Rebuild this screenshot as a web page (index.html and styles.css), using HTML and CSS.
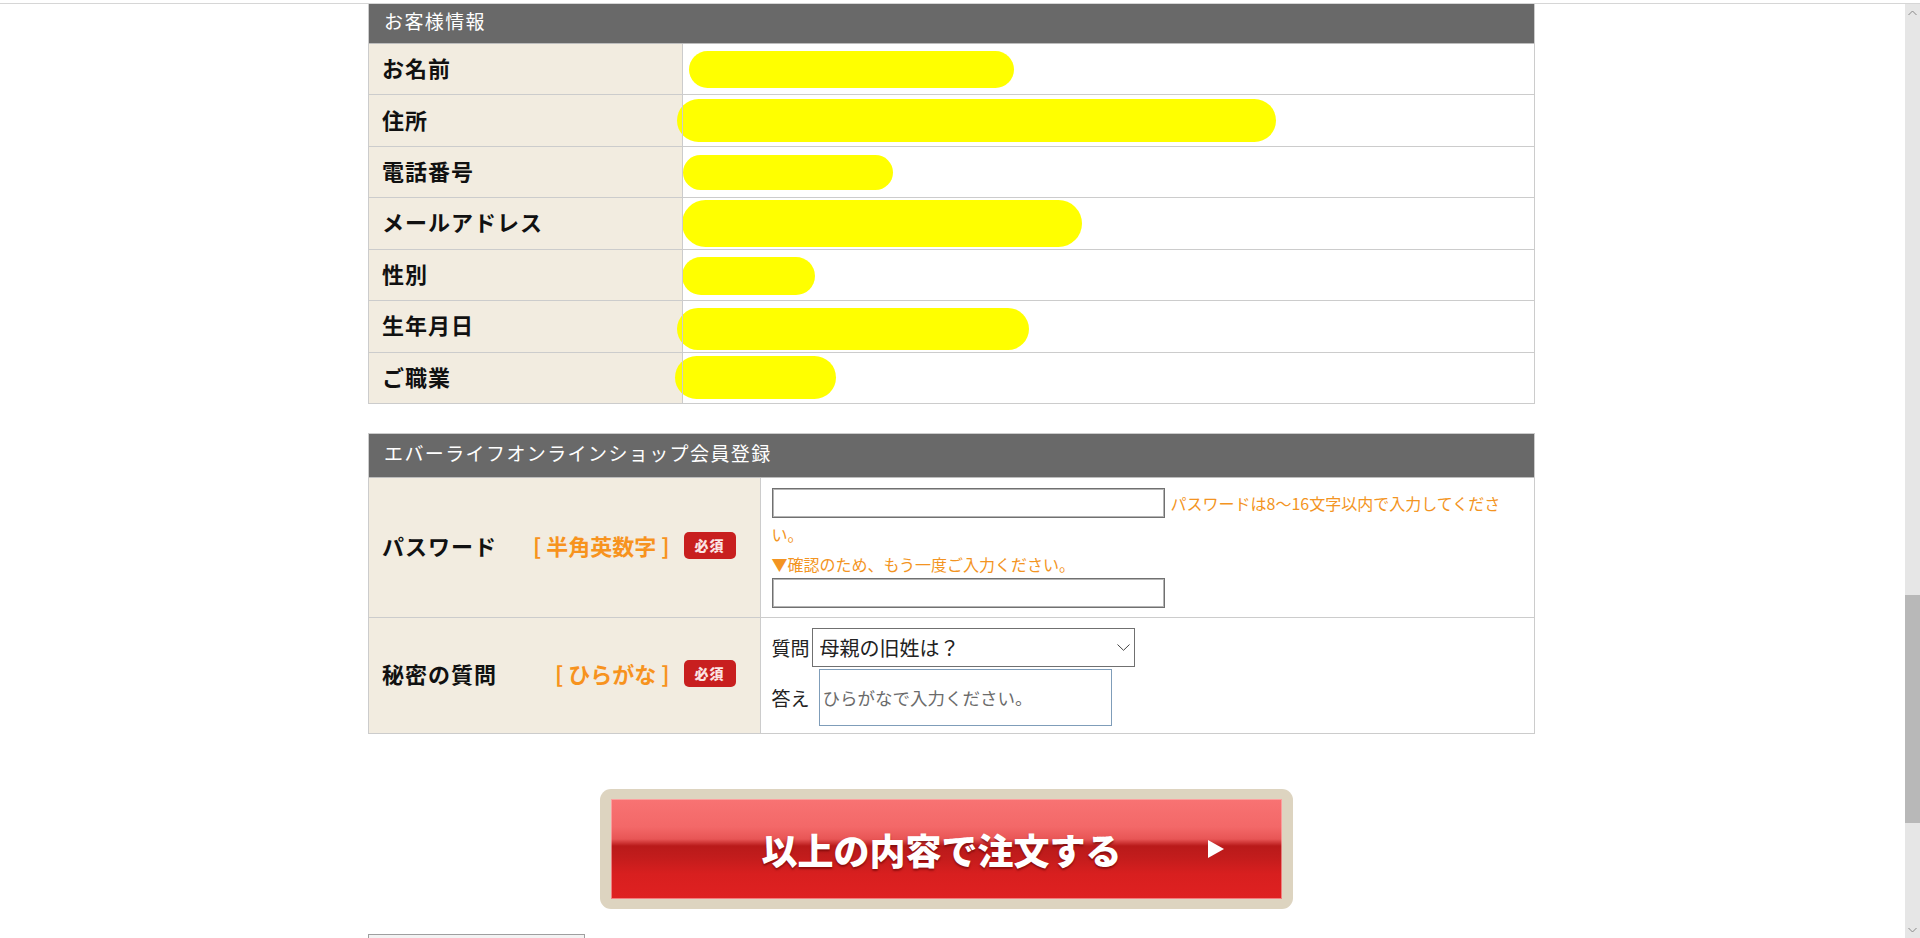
FILE: index.html
```html
<!DOCTYPE html>
<html lang="ja">
<head>
    <meta charset="UTF-8">
    <meta name="viewport" content="width=device-width, initial-scale=1.0">
    <title>ご注文内容の確認</title>
    <link rel="stylesheet" href="styles.css">
</head>
<body>
    <div class="topline"></div>
    <div class="window">
        <div class="page">
            <main class="content">
                <section class="box box-first">
                    <h2 class="box-title">お客様情報</h2>
                    <table class="info info-customer">
                        <tr><th>お名前</th><td><span class="mask mask-name"></span></td></tr>
                        <tr><th>住所</th><td><span class="mask mask-address"></span></td></tr>
                        <tr><th>電話番号</th><td><span class="mask mask-tel"></span></td></tr>
                        <tr><th>メールアドレス</th><td><span class="mask mask-mail"></span></td></tr>
                        <tr><th>性別</th><td><span class="mask mask-gender"></span></td></tr>
                        <tr><th>生年月日</th><td><span class="mask mask-birth"></span></td></tr>
                        <tr><th>ご職業</th><td><span class="mask mask-job"></span></td></tr>
                    </table>
                </section>

                <section class="box">
                    <h2 class="box-title">エバーライフオンラインショップ会員登録</h2>
                    <table class="info info-member">
                        <tr class="row-password">
                            <th>
                                <div class="label-wrap">
                                    <span>パスワード</span>
                                    <span class="label-side"><span class="hint">[ 半角英数字 ]</span><span class="required">必須</span></span>
                                </div>
                            </th>
                            <td>
                                <div class="pw-first"><input type="password" class="text-input"><span class="note">パスワードは8〜16文字以内で入力してください。</span></div>
                                <p class="note-block">▼確認のため、もう一度ご入力ください。</p>
                                <input type="password" class="text-input text-input-block">
                            </td>
                        </tr>
                        <tr>
                            <th>
                                <div class="label-wrap">
                                    <span>秘密の質問</span>
                                    <span class="label-side"><span class="hint">[ ひらがな ]</span><span class="required">必須</span></span>
                                </div>
                            </th>
                            <td>
                                <div class="qa-line">
                                    <span class="qa-label">質問</span>
                                    <span class="select-wrap">
                                        <select class="question">
                                            <option>母親の旧姓は？</option>
                                            <option>最初のペットの名前は？</option>
                                        </select>
                                        <svg class="chevron" width="13" height="7" viewBox="0 0 13 7"><polyline points="0.5,0.5 6.5,6.3 12.5,0.5" fill="none" stroke="#444" stroke-width="1"/></svg>
                                    </span>
                                </div>
                                <div class="qa-line">
                                    <span class="qa-label">答え</span>
                                    <input type="text" class="answer" placeholder="ひらがなで入力ください。">
                                </div>
                            </td>
                        </tr>
                    </table>
                </section>

                <div class="order">
                    <button type="button" class="order-btn"><span class="order-face">以上の内容で注文する<span class="order-arrow"></span></span></button>
                </div>

                <div class="back-box"></div>
            </main>
        </div>
        <div class="scrollbar">
            <span class="sb-arrow"><svg width="9" height="6" viewBox="0 0 9 6"><polyline points="0.5,5 4.5,1 8.5,5" fill="none" stroke="#888" stroke-width="1"/></svg></span>
            <div class="sb-track"><div class="sb-thumb"></div></div>
            <span class="sb-arrow"><svg width="9" height="6" viewBox="0 0 9 6"><polyline points="0.5,1 4.5,5 8.5,1" fill="none" stroke="#888" stroke-width="1"/></svg></span>
        </div>
    </div>
</body>
</html>
```

FILE: styles.css
```css
body {
    margin: 0;
    font-family: "Noto Sans CJK JP", "Noto Sans", sans-serif;
    background-color: #fff;
    color: #222;
    overflow: hidden;
}
.topline {
    height: 1px;
    margin-top: 3px;
    background-color: #d6d6d6;
}
.window {
    display: flex;
    height: 934px;
}
.page {
    flex: 1;
    overflow: hidden;
}
.content {
    width: 1167px;
    margin: 0 auto;
}

/* boxes */
.box {
    border: 1px solid #ccc;
    background-color: #fff;
}
.box + .box {
    margin-top: 29px;
}
.box-first {
    border-top: none;
}
.box-title {
    margin: 0;
    height: 43px;
    padding: 0 15px;
    background-color: #696969;
    color: #fff;
    font-size: 19px;
    font-weight: normal;
    letter-spacing: 1.4px;
    line-height: 38px;
    border-bottom: 1px solid #bdbdbd;
}
.box-first .box-title {
    height: 39px;
    line-height: 33px;
}

/* tables */
.info {
    width: 100%;
    border-collapse: collapse;
}
.info th {
    background-color: #f2ece0;
    text-align: left;
    font-size: 22px;
    font-weight: bold;
    letter-spacing: 1px;
    color: #111;
    padding: 0 13px 4px;
    border-right: 1px solid #ccc;
    vertical-align: middle;
    box-sizing: border-box;
}
.info tr + tr th,
.info tr + tr td {
    border-top: 1px solid #ccc;
}
.info-customer th {
    width: 313px;
    height: 50.43px;
}
.info-customer td {
    padding: 0;
    height: 50.43px;
}
.mask {
    display: block;
    background-color: #ff0;
    border-radius: 999px;
}
.mask-name { width: 325px; height: 37px; margin-left: 6px; }
.mask-address { width: 599px; height: 43px; margin-left: -6px; }
.mask-tel { width: 210px; height: 35px; }
.mask-mail { width: 400px; height: 47px; margin-left: -1px; }
.mask-gender { width: 133px; height: 38px; margin-left: -1px; margin-top: 2px; }
.mask-birth { width: 352px; height: 42px; margin-left: -6px; margin-top: 5px; }
.mask-job { width: 161px; height: 43px; margin-left: -8px; }

.info-member th {
    width: 391px;
    padding: 0 24px 4px 13px;
}
.info-member td {
    padding: 10px 20px 7px 11px;
    vertical-align: top;
}
.row-password td {
    padding-bottom: 9px;
}
.label-wrap {
    display: flex;
    align-items: center;
    justify-content: space-between;
}
.label-side {
    display: flex;
    align-items: center;
    gap: 14px;
    letter-spacing: 0;
}
.hint {
    color: #f7931e;
    font-size: 22px;
    white-space: pre;
}
.required {
    display: inline-flex;
    align-items: center;
    justify-content: center;
    width: 52px;
    height: 27px;
    border-radius: 5px;
    background-color: #c81f1f;
    color: #fbe4e4;
    font-size: 14px;
    font-weight: 900;
    letter-spacing: 1px;
}

/* password */
.pw-first {
    font-size: 16px;
    line-height: 31px;
    color: #f39422;
}
.text-input {
    width: 393px;
    height: 30px;
    box-sizing: border-box;
    margin: 0;
    padding: 0 4px;
    border: 1px solid #707070;
    box-shadow: inset 0 0 0 1px #b5b5b5;
    vertical-align: top;
    font-size: 16px;
}
.text-input-block {
    display: block;
}
.note {
    margin-left: 6px;
}
.note-block {
    margin: 0;
    font-size: 16px;
    line-height: 28px;
    color: #f39422;
}

/* secret question */
.qa-line {
    display: flex;
    align-items: center;
    font-size: 19px;
    color: #222;
}
.qa-line + .qa-line {
    margin-top: 2px;
}
.qa-label {
    margin-right: 2px;
}
.select-wrap {
    position: relative;
    display: inline-block;
}
.question {
    -webkit-appearance: none;
    appearance: none;
    width: 323px;
    height: 39px;
    margin: 0;
    padding: 0 30px 0 7px;
    border: 1px solid #707070;
    border-radius: 0;
    background-color: #fff;
    font-family: inherit;
    font-size: 20px;
    color: #222;
}
.chevron {
    position: absolute;
    right: 5px;
    top: 16px;
    pointer-events: none;
}
.answer {
    width: 293px;
    height: 57px;
    box-sizing: border-box;
    margin: 0 0 0 7px;
    padding: 0 3px;
    border: 1px solid #7f9db9;
    font-family: inherit;
    font-size: 17.5px;
}
.answer::placeholder {
    color: #6b6b6b;
}

/* order button */
.order {
    display: flex;
    justify-content: center;
    padding-right: 10px;
    margin-top: 55px;
}
.order-btn {
    width: 693px;
    height: 120px;
    box-sizing: border-box;
    padding: 10px 11px;
    border: none;
    border-radius: 11px;
    background-color: #ddd4c0;
    font-family: inherit;
    cursor: pointer;
}
.order-face {
    position: relative;
    display: flex;
    align-items: center;
    justify-content: center;
    height: 100%;
    box-sizing: border-box;
    padding-right: 10px;
    background: linear-gradient(to bottom, #f87373 0%, #f36868 28%, #e85656 40%, #b91a1a 47%, #c21c1c 58%, #d81f1f 75%, #df2121 100%);
    box-shadow: inset 0 0 0 1px rgba(255, 190, 190, 0.6);
    color: #fff;
    font-size: 36px;
    font-weight: 900;
    text-shadow: 0 2px 2px rgba(90, 0, 0, 0.55);
}
.order-arrow {
    position: absolute;
    right: 58px;
    top: 50%;
    margin-top: -9px;
    border-left: 16px solid #fff;
    border-top: 9px solid transparent;
    border-bottom: 9px solid transparent;
}
.back-box {
    width: 217px;
    height: 40px;
    margin-top: 25px;
    box-sizing: border-box;
    border: 1px solid #9f9f9f;
    background-color: #f3f3f3;
}

/* scrollbar */
.scrollbar {
    width: 15px;
    margin-left: 2px;
    background-color: #e6e6e6;
    display: flex;
    flex-direction: column;
}
.sb-arrow {
    height: 17px;
    display: flex;
    align-items: center;
    justify-content: center;
}
.sb-track {
    flex: 1;
}
.sb-thumb {
    margin-top: 574px;
    height: 228px;
    background-color: #b8b8b8;
}
```
